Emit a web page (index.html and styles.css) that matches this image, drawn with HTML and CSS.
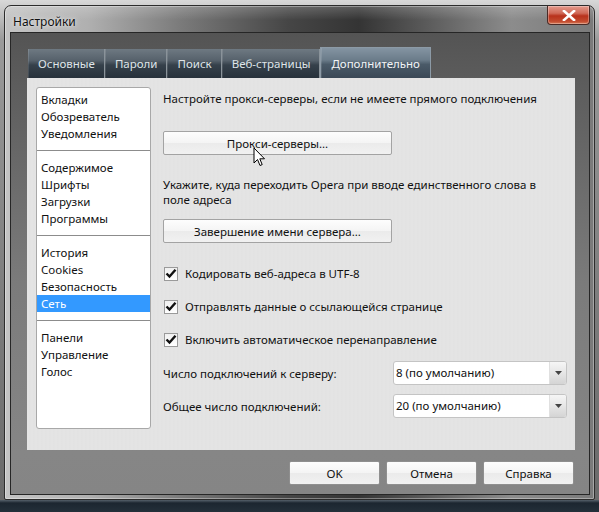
FILE: index.html
```html
<!DOCTYPE html>
<html lang="ru">
<head>
<meta charset="utf-8">
<title>Настройки</title>
<link rel="stylesheet" href="styles.css">
</head>
<body>
<div class="desk">
  <div class="window">
    <div class="titlebar">
      <span class="title">Настройки</span>
      <button class="close" aria-label="Закрыть">
        <svg width="14" height="11" viewBox="0 0 14 11"><path d="M2 1 L12 10 M12 1 L2 10" stroke="#fff" stroke-width="2.6" stroke-linecap="square"/></svg>
      </button>
    </div>
    <div class="client">
      <div class="tabs">
        <div class="tab">Основные</div>
        <div class="tab">Пароли</div>
        <div class="tab">Поиск</div>
        <div class="tab">Веб-страницы</div>
        <div class="tab active">Дополнительно</div>
      </div>
      <div class="panel">
        <ul class="nav">
          <li>Вкладки</li>
          <li>Обозреватель</li>
          <li>Уведомления</li>
          <li class="sep"></li>
          <li>Содержимое</li>
          <li>Шрифты</li>
          <li>Загрузки</li>
          <li>Программы</li>
          <li class="sep"></li>
          <li>История</li>
          <li>Cookies</li>
          <li>Безопасность</li>
          <li class="sel">Сеть</li>
          <li class="sep"></li>
          <li>Панели</li>
          <li>Управление</li>
          <li>Голос</li>
        </ul>
        <div class="page">
          <p class="line">Настройте прокси-серверы, если не имеете прямого подключения</p>
          <div class="btnwrap btn-proxy">
            <button class="btn wide">Прокси-серверы...</button>
            <svg class="cursor" width="13" height="20" viewBox="0 0 13 20"><path d="M1 1 L1 16 L4.5 12.5 L7 18.5 L9.2 17.6 L6.8 11.8 L11.5 11.8 Z" fill="#fff" stroke="#000" stroke-width="1" stroke-linejoin="round"/></svg>
          </div>
          <p class="para">Укажите, куда переходить Opera при вводе единственного слова в<br>поле адреса</p>
          <button class="btn wide btn-complete">Завершение имени сервера...</button>
          <label class="check first"><span class="box"><svg width="12" height="11" viewBox="0 0 12 11"><path d="M1.5 5.5 L4.5 8.5 L10.5 1.8" fill="none" stroke="#111" stroke-width="2.4"/></svg></span>Кодировать веб-адреса в UTF-8</label>
          <label class="check"><span class="box"><svg width="12" height="11" viewBox="0 0 12 11"><path d="M1.5 5.5 L4.5 8.5 L10.5 1.8" fill="none" stroke="#111" stroke-width="2.4"/></svg></span>Отправлять данные о ссылающейся странице</label>
          <label class="check"><span class="box"><svg width="12" height="11" viewBox="0 0 12 11"><path d="M1.5 5.5 L4.5 8.5 L10.5 1.8" fill="none" stroke="#111" stroke-width="2.4"/></svg></span>Включить автоматическое перенаправление</label>
          <div class="field first-field">
            <span class="flabel">Число подключений к серверу:</span>
            <div class="select"><span class="value">8 (по умолчанию)</span><span class="arrow"><svg width="7" height="4" viewBox="0 0 7 4"><path d="M0 0 H7 L3.5 4 Z" fill="#444"/></svg></span></div>
          </div>
          <div class="field">
            <span class="flabel">Общее число подключений:</span>
            <div class="select"><span class="value">20 (по умолчанию)</span><span class="arrow"><svg width="7" height="4" viewBox="0 0 7 4"><path d="M0 0 H7 L3.5 4 Z" fill="#444"/></svg></span></div>
          </div>
        </div>
      </div>
      <div class="actions">
        <button class="btn act">OK</button>
        <button class="btn act">Отмена</button>
        <button class="btn act">Справка</button>
      </div>
    </div>
  </div>
  <div class="taskbar"></div>
</div>
</body>
</html>
```
FILE: styles.css
```css
* { box-sizing: border-box; }

html, body {
  margin: 0;
  padding: 0;
}

body {
  width: 599px;
  height: 512px;
  overflow: hidden;
  background: linear-gradient(180deg, #d8d8d8 0px, #9a9a9a 40px, #7d7d7d 300px, #6a6a6a 500px);
  font-family: "Noto Sans", "Open Sans", sans-serif;
  font-size: 11.5px;
  color: #111;
}

.desk {
  display: flex;
  flex-direction: column;
  height: 512px;
  padding-top: 5px;
}

/* Window frame */
.window {
  margin: 0 4px;
  width: 591px;
  height: 495px;
  border: 1px solid #2c2c2c;
  border-radius: 7px 7px 2px 2px;
  padding: 0 4px 4px 5px;
  display: flex;
  flex-direction: column;
  background:
    linear-gradient(180deg, rgba(255,255,255,0.2) 0px, rgba(255,255,255,0) 14px),
    linear-gradient(90deg, #c4c4c4 0%, #b0b0b0 14%, #7a7a7a 30%, #464646 48%, #343434 60%, #5c5c5c 72%, #8c8c8c 86%, #7a7a7a 100%);
  box-shadow: inset 0 0 0 1px rgba(255,255,255,0.35);
}

.titlebar {
  height: 26px;
  flex: none;
  display: flex;
  align-items: flex-start;
  justify-content: space-between;
}

.title {
  padding: 7px 0 0 3px;
  font-size: 12px;
  color: #101010;
  text-shadow: 0 0 6px rgba(255,255,255,0.8), 0 0 2px rgba(255,255,255,0.6);
}

.close {
  width: 43px;
  height: 19px;
  border: 1px solid #4a2a26;
  border-top: none;
  border-radius: 0 0 4px 4px;
  background: linear-gradient(180deg, #e49a8c 0%, #d06a58 40%, #b8321c 55%, #c24a2e 85%, #d87a58 100%);
  box-shadow: inset 0 0 0 1px rgba(255,255,255,0.3);
  display: flex;
  align-items: center;
  justify-content: center;
  padding: 0;
}

/* Inner client area */
.client {
  flex: 1;
  border: 1px solid #262626;
  background: linear-gradient(180deg, #545454 0px, #5e5e5e 60px, #7b7b7b 250px, #868686 420px, #858585 100%);
  padding: 14px 14px 0 16px;
  display: flex;
  flex-direction: column;
}

.tabs {
  display: flex;
  align-items: flex-end;
  height: 31px;
  padding-left: 1px;
}

.tab {
  height: 29px;
  padding: 0 9px 0 10px;
  display: flex;
  align-items: center;
  color: #dfe4e8;
  background: linear-gradient(180deg, #6e7982 0%, #56616b 40%, #36414b 55%, #27313b 100%);
  border-right: 1px solid #8a939a;
  box-shadow: inset 1px 0 0 rgba(255,255,255,0.12);
}

.tab:last-child { border-right: none; }

.tab.active {
  height: 31px;
  padding: 0 10px;
  color: #f2f4f6;
  background: linear-gradient(180deg, #8494a2 0%, #6b7c8a 40%, #4a5a68 55%, #3a4856 100%);
  border: 1px solid #8c9aa6;
  border-bottom: none;
}

/* Content panel */
.panel {
  width: 548px;
  height: 372px;
  background: repeating-linear-gradient(90deg, #e4e4e4 0px, #e4e4e4 2px, #e1e1e1 3px, #e5e5e5 4px);
  padding: 9px 0 0 9px;
  display: flex;
  align-items: flex-start;
  gap: 12px;
}

.nav {
  list-style: none;
  margin: 0;
  padding: 3px 0 0;
  width: 115px;
  height: 342px;
  background: #fff;
  border: 1px solid #a8a8a8;
  border-radius: 3px;
  flex: none;
}

.nav li {
  height: 17px;
  line-height: 17px;
  padding-left: 4px;
  white-space: nowrap;
}

.nav li.sep {
  height: 1px;
  margin: 8px 0;
  background: #8c8c8c;
}

.nav li.sel {
  background: #3399ff;
  color: #fff;
}

.page {
  display: flex;
  flex-direction: column;
  align-items: flex-start;
  padding-top: 3px;
  width: 404px;
}

.line {
  margin: 0;
  height: 17px;
  line-height: 17px;
  white-space: nowrap;
}

.para {
  margin: 22px 0 0;
  line-height: 15px;
}

.btnwrap {
  position: relative;
}

.btn-proxy { margin-top: 24px; }

.btn {
  font-family: inherit;
  font-size: 11.5px;
  color: #111;
  border: 1px solid #a3a3a3;
  border-radius: 2px;
  background: linear-gradient(180deg, #fdfdfd 0%, #f4f4f4 50%, #ebebeb 51%, #f1f1f1 100%);
  padding: 0;
}

.btn.wide {
  width: 229px;
  height: 24px;
  display: block;
}

.btn-complete { margin-top: 12px; }

.cursor {
  position: absolute;
  left: 90px;
  top: 16px;
}

.check {
  display: flex;
  align-items: center;
  height: 17px;
  margin-top: 16px;
  white-space: nowrap;
}

.check.first { margin-top: 22px; }

.box {
  width: 14px;
  height: 14px;
  margin: 0 7px 0 1px;
  border: 1px solid #9a9a9a;
  background: linear-gradient(180deg, #f0f0f0, #ffffff);
  display: flex;
  align-items: center;
  justify-content: center;
}

.field {
  display: flex;
  align-items: center;
  width: 404px;
  margin-top: 9px;
}

.first-field { margin-top: 13px; }

.flabel {
  width: 230px;
  flex: none;
}

.select {
  width: 174px;
  height: 24px;
  border: 1px solid #c4c4c4;
  border-radius: 3px;
  background: #fff;
  display: flex;
  align-items: stretch;
}

.value {
  flex: 1;
  padding-left: 2px;
  line-height: 22px;
}

.arrow {
  width: 17px;
  border-left: 1px solid #e0e0e0;
  background: linear-gradient(180deg, #f6f6f6 0%, #e6e6e6 50%, #d4d4d4 100%);
  border-radius: 0 2px 2px 0;
  display: flex;
  align-items: center;
  justify-content: center;
}

/* Dialog buttons */
.actions {
  display: flex;
  justify-content: flex-end;
  gap: 6px;
  width: 548px;
  padding-right: 1px;
  margin-top: 11px;
}

.btn.act {
  width: 91px;
  height: 24px;
  border-color: #8f8f8f;
}

.taskbar {
  flex: 1;
  background: linear-gradient(180deg, #55606a 0px, #1c2630 3px, #24303a 100%);
}
```
